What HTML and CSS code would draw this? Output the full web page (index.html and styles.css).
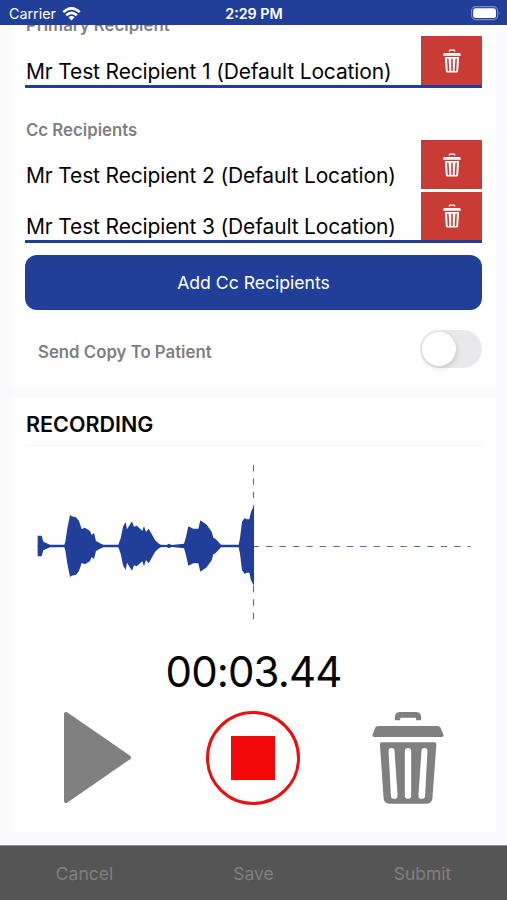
FILE: index.html
```html
<!DOCTYPE html>
<html lang="en">
<head>
    <meta charset="UTF-8">
    <meta name="viewport" content="width=device-width, initial-scale=1.0">
    <title>Recording</title>
    <link rel="stylesheet" href="styles.css">
</head>
<body>

<svg class="sprite" width="0" height="0">
    <symbol id="trash" viewBox="66 35 215 277">
        <path d="M134 60 V50 Q135 35 150 35 H197 Q212 35 213 50 V60 H198 V55 Q198 52 195 52 H153 Q150 52 150 55 V60 Z"/>
        <path d="M84 77 H263 Q269 77 271 82 L280 103 Q282 110 275 110 H72 Q65 110 67 103 L75 82 Q77 77 84 77 Z"/>
        <path fill-rule="evenodd" d="M94 126 H253 Q259 126 259 132 L247 295 Q245 311 230 311 H117 Q102 311 100 295 L89 132 Q89 126 94 126 Z M115 153 L122 287 A10 10 0 0 0 142 286 L133 152 A9 9 0 0 0 115 153 Z M164 153 V287 A9.500 9.500 0 0 0 183 287 V153 A9.500 9.500 0 0 0 164 153 Z M214 152 L205 286 A10 10 0 0 0 225 287 L232 153 A9 9 0 0 0 214 152 Z"/>
    </symbol>
</svg>

<div class="screen">
    <header class="status-bar">
        <div class="carrier">
            <span>Carrier</span>
            <svg width="19" height="14" viewBox="0 0 19 14" fill="none" stroke="#fff" stroke-width="2.600">
                <path d="M1.300 5.100 Q9.500 -2.400 17.700 5.100"/>
                <path d="M4.200 8.200 Q9.500 3.400 14.800 8.200"/>
                <path d="M6.500 10.300 Q9.500 7.700 12.500 10.300 L9.500 13.500 Z" fill="#fff" stroke="none"/>
            </svg>
        </div>
        <span class="time">2:29 PM</span>
        <div class="battery">
            <svg width="30" height="15" viewBox="0 0 30 15">
                <rect x="0.600" y="0.600" width="26" height="13" rx="4" fill="none" stroke="#7a8bc3" stroke-width="1.100"/>
                <rect x="2.200" y="2.200" width="22.800" height="9.800" rx="2.500" fill="#fff"/>
                <path d="M27.800 5 Q29.600 7.100 27.800 9.200 Z" fill="#7a8bc3"/>
            </svg>
        </div>
    </header>

    <main class="content">
        <section class="card recipients">
            <h3 class="label">Primary Recipient</h3>
            <div class="list">
                <div class="recipient">
                    <span class="name">Mr Test Recipient 1 (Default Location)</span>
                    <button class="delete"><svg><use href="#trash"/></svg></button>
                </div>
            </div>

            <h3 class="label cc">Cc Recipients</h3>
            <div class="list">
                <div class="recipient">
                    <span class="name">Mr Test Recipient 2 (Default Location)</span>
                    <button class="delete"><svg><use href="#trash"/></svg></button>
                </div>
                <div class="recipient">
                    <span class="name">Mr Test Recipient 3 (Default Location)</span>
                    <button class="delete"><svg><use href="#trash"/></svg></button>
                </div>
            </div>

            <button class="add">Add Cc Recipients</button>

            <div class="copy">
                <span class="label">Send Copy To Patient</span>
                <div class="toggle"><div class="knob"></div></div>
            </div>
        </section>

        <section class="card recording">
            <h2>RECORDING</h2>
            <svg class="wave" viewBox="15 0 1371 510">
                <path class="dash" d="M53 259.500 H1351"/>
                <path class="dash" d="M700.500 15 V480"/>
                <path id="half" d="M53 259 V227 H65 L70 245 L90 254 H133 L136 245 L142 205 L150 165 L155 169 L168 172 L177 183 L185 207 L195 203 L210 213 L215 225 L222 219 L228 243 L240 250 L250 254 H295 L302 235 L309 200 L317 186 L321 208 L327 198 L336 184 L342 200 L350 197 L367 212 L372 198 L378 216 L386 206 L395 222 L405 240 L415 250 L422 254 L440 255 L446 251 L455 255 L478 253 L492 251 L497 235 L505 199 L520 206 H535 L541 181 L560 194 L575 215 L580 233 L587 237 L603 254 H656 L660 235 L666 185 L674 174 L680 178 L688 178 L693 155 L702 138 V259 Z"/>
                <use href="#half" transform="translate(0 516) scale(1 -1)"/>
            </svg>
            <div class="timer">00:03.44</div>
            <div class="controls">
                <button class="play">
                    <svg width="70" height="94" viewBox="0 0 70 94">
                        <path d="M3 3 L66 46.500 L3 90 Z" stroke-width="4" stroke-linejoin="round"/>
                    </svg>
                </button>
                <button class="stop"><span></span></button>
                <button class="discard"><svg><use href="#trash"/></svg></button>
            </div>
        </section>
    </main>

    <footer class="actions">
        <button>Cancel</button>
        <button>Save</button>
        <button>Submit</button>
    </footer>
</div>

</body>
</html>
```
FILE: styles.css
```css
* {
    box-sizing: border-box;
}
body {
    margin: 0;
    font-family: 'Inter', sans-serif;
    background-color: #fbfbfe;
    color: #050505;
}
button {
    margin: 0;
    padding: 0;
    border: 0;
    background: none;
    font-family: inherit;
}
svg {
    display: block;
}
.sprite {
    display: none;
}
.screen {
    display: flex;
    flex-direction: column;
    height: 900px;
    overflow: hidden;
}
.status-bar {
    display: grid;
    grid-template-columns: 1fr auto 1fr;
    align-items: center;
    flex: none;
    height: 25px;
    padding: 2px 6px 0 9px;
    background-color: #213f99;
    color: white;
    font-size: 14.3px;
}
.carrier {
    display: flex;
    align-items: center;
    gap: 6px;
}
.time {
    margin-left: -2px;
    font-weight: 600;
}
.battery {
    justify-self: end;
}
.content {
    flex: 1;
    min-height: 0;
    padding: 0 11px 0 12px;
    overflow: hidden;
}
.card {
    padding: 0 14px 0 13px;
    background-color: white;
}
.recipients {
    height: 373px;
    margin-top: -10px;
}
.label {
    margin: 0;
    padding-left: 1px;
    color: #808080;
    font-size: 16.8px;
    font-weight: 600;
    line-height: 21px;
}
.label.cc {
    height: 52.5px;
    padding-top: 32px;
}
.list {
    display: flex;
    flex-direction: column;
    gap: 3px;
    border-bottom: 3px solid #213f99;
}
.recipient {
    display: flex;
    justify-content: space-between;
    height: 48.5px;
}
.name {
    align-self: flex-end;
    padding-left: 1px;
    font-size: 21px;
    letter-spacing: -0.15px;
    line-height: 26px;
    white-space: nowrap;
}
.delete {
    display: flex;
    align-items: center;
    justify-content: center;
    width: 61px;
    padding-top: 1px;
    background-color: #c83c35;
}
.delete svg {
    width: 18px;
    height: 24px;
    fill: white;
}
.add {
    display: block;
    width: 100%;
    height: 55px;
    margin-top: 12px;
    border-radius: 12px;
    background-color: #213f99;
    color: white;
    font-size: 17.6px;
}
.copy {
    display: flex;
    align-items: center;
    justify-content: space-between;
    height: 38px;
    margin-top: 20px;
    padding-left: 12px;
}
.copy .label {
    padding-top: 7px;
}
.toggle {
    width: 62px;
    height: 38px;
    padding: 2px;
    border-radius: 19px;
    background-color: #e9e9eb;
}
.knob {
    width: 34px;
    height: 34px;
    border-radius: 50%;
    background-color: white;
    box-shadow: 1px 2px 5px rgba(0,0,0,0.15);
}
.recording {
    height: 435px;
    margin-top: 9px;
}
h2 {
    height: 49px;
    margin: 0;
    padding-left: 1px;
    border-bottom: 1px solid #f5f5f7;
    font-size: 21.5px;
    font-weight: 600;
    line-height: 55px;
}
.wave {
    width: 457px;
    height: 170px;
    margin-top: 14px;
    fill: #213f99;
}
.dash {
    fill: none;
    stroke: #6067ab;
    stroke-width: 3.5;
    stroke-dasharray: 19.300 21;
}
.timer {
    height: 81px;
    font-size: 42px;
    letter-spacing: -0.9px;
    line-height: 84px;
    text-align: center;
}
.controls {
    display: grid;
    grid-template-columns: repeat(3, 1fr);
    justify-items: center;
    margin: 0 -3px 0 -5px;
}
.play svg {
    fill: #808080;
    stroke: #808080;
}
.stop {
    display: flex;
    align-items: center;
    justify-content: center;
    width: 94px;
    height: 94px;
    border: 3px solid #e81010;
    border-radius: 50%;
}
.stop span {
    width: 44px;
    height: 44px;
    background-color: #f20808;
}
.discard svg {
    width: 72px;
    height: 92px;
    fill: #808080;
}
.actions {
    display: grid;
    grid-template-columns: repeat(3, 1fr);
    flex: none;
    height: 55px;
    border-top: 1px solid #909090;
    background-color: #555;
}
.actions button {
    color: #808080;
    font-size: 17.5px;
}
```
